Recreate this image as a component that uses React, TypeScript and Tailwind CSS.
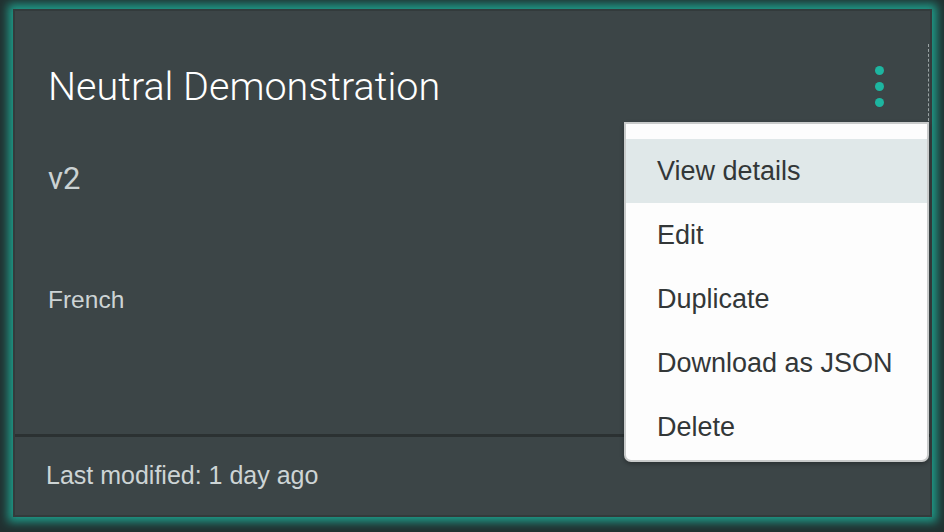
import React from "react";

export default function App() {
  const items = ["View details", "Edit", "Duplicate", "Download as JSON", "Delete"];
  return (
    <div
      className="w-[944px] h-[532px] bg-[#213030] pt-[9px] pl-[13px] overflow-hidden"
      style={{ fontFamily: '"Liberation Sans", Arial, sans-serif' }}
    >
      <div className="relative w-[919px] h-[508px] bg-[#3c4547] border-2 border-[#333b3c] shadow-[0_0_9px_5px_#1f9a88] flex flex-col">
        <div className="flex items-start justify-between pl-[33px] pr-[46px] pt-[54px]">
          <div className="text-[39.5px] leading-[44px] text-white" style={{ fontFamily: 'Roboto, "Liberation Sans", sans-serif', fontWeight: 300 }}>
            Neutral Demonstration
          </div>
          <div className="flex flex-col gap-[7px] pt-[1px]">
            <span className="block w-[9px] h-[9px] rounded-full bg-[#1db5a0]" />
            <span className="block w-[9px] h-[9px] rounded-full bg-[#1db5a0]" />
            <span className="block w-[9px] h-[9px] rounded-full bg-[#1db5a0]" />
          </div>
        </div>
        <div className="pl-[33px] pt-[52px] text-[31px] leading-[36px] text-[#cbd2d3]" style={{ fontFamily: 'Roboto, "Liberation Sans", sans-serif', fontWeight: 400 }}>v2</div>
        <div className="pl-[33px] pt-[88px] text-[24.5px] leading-[30px] text-[#cdd4d5]">French</div>
        <div className="mt-auto border-t-[3px] border-[#2b3132] h-[81px] pl-[31px] pt-[23px] text-[25px] leading-[30px] text-[#cdd4d5]">
          Last modified: 1 day ago
        </div>
        <div className="absolute left-[913px] top-[33px] h-[82px] border-l border-dashed border-[#9aa3a4]" />
        <div className="absolute left-[609px] top-[111px] w-[305px] bg-[#fdfdfd] border-2 border-[#c9cbcb] rounded-b-[7px] pt-[15px] pb-[1px] shadow-[0_2px_4px_rgba(0,0,0,0.3)]">
          {items.map((t, i) => (
            <div
              key={t}
              className={`h-[64px] flex items-center pl-[31px] text-[27px] text-[#333738] ${i === 0 ? "bg-[#e0e8e9]" : ""}`}
            >
              {t}
            </div>
          ))}
        </div>
      </div>
    </div>
  );
}
